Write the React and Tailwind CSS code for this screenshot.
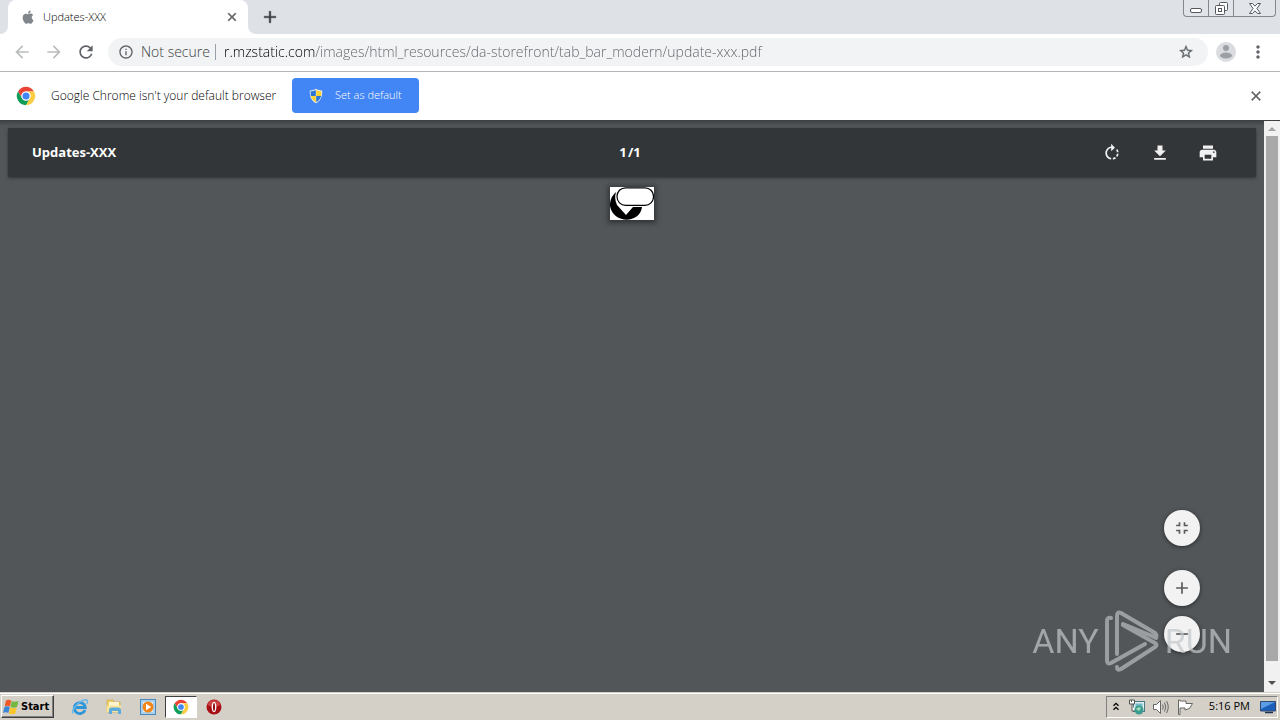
import React from "react";

function AppleIcon() {
  return (
    <svg viewBox="1 1 22 22" className="size-4 fill-[#80868b]" aria-hidden="true">
      <path d="M17.1 12.7c0-2.3 1.9-3.4 2-3.5-1.100-1.600-2.800-1.800-3.400-1.900-1.400-.1-2.800.9-3.500.9s-1.800-.8-3-.8c-1.500 0-3 .9-3.800 2.300-1.600 2.800-.4 7 1.200 9.300.8 1.100 1.700 2.400 2.900 2.300 1.200 0 1.600-.7 3-.7s1.800.7 3 .7c1.300 0 2.100-1.100 2.800-2.200.9-1.300 1.200-2.600 1.300-2.600-.1-.1-2.500-1-2.500-3.800zM14.800 5.900c.6-.8 1.100-1.900.9-2.900-.9 0-2 .6-2.700 1.400-.6.7-1.100 1.700-1 2.800 1.100.1 2.100-.5 2.800-1.300z" />
    </svg>
  );
}

function ChromeIcon({ className }) {
  return (
    <svg viewBox="0 0 48 48" className={className} aria-hidden="true">
      <circle cx="24" cy="24" r="22" fill="#fff" />
      <path d="M24 13H43A22 22 0 0 0 4.900 13L14.500 29.500A11 11 0 0 1 24 13Z" fill="#ea4335" />
      <path d="M14.500 29.500L4.900 13A22 22 0 0 0 24 46L33.500 29.500A11 11 0 0 1 14.500 29.500Z" fill="#109d58" />
      <path d="M33.500 29.500L24 46A22 22 0 0 0 43.100 13H24A11 11 0 0 1 33.500 29.500Z" fill="#fbcd42" />
      <circle cx="24" cy="24" r="11" fill="#fff" />
      <circle cx="24" cy="24" r="8.500" fill="#4285f4" />
    </svg>
  );
}

function ShieldIcon() {
  return (
    <svg viewBox="0 0 16 16" className="size-4" aria-hidden="true">
      <path d="M8 .8C6 2 4 2.500 1.800 2.400C1.500 8 3 12.500 8 15.300C13 12.500 14.500 8 14.200 2.400C12 2.500 10 2 8 .8Z" fill="#e8edf2" />
      <path d="M7.800 2V8H2.900C2.600 6.500 2.600 5 2.700 3.300C4.600 3.300 6.300 2.900 7.800 2Z" fill="#2b76d2" />
      <path d="M8.200 2V8H13.100C13.400 6.500 13.400 5 13.300 3.300C11.400 3.300 9.700 2.900 8.200 2Z" fill="#fad232" />
      <path d="M7.800 8V14.200C5.200 12.700 3.600 10.700 2.900 8Z" fill="#fad232" />
      <path d="M8.200 8V14.200C10.800 12.700 12.400 10.700 13.100 8Z" fill="#2b76d2" />
    </svg>
  );
}

function Glyph({ d, className }) {
  return (
    <svg viewBox="0 0 24 24" className={className} aria-hidden="true">
      <path d={d} />
    </svg>
  );
}

const glyphs = {
  close: "M19 6.410 17.590 5 12 10.590 6.410 5 5 6.410 10.590 12 5 17.590 6.410 19 12 13.410 17.590 19 19 17.590 13.410 12z",
  plus: "M19 13h-6v6h-2v-6H5v-2h6V5h2v6h6v2z",
  minus: "M19 13H5v-2h14v2z",
  back: "M20 11H7.830l5.590-5.590L12 4l-8 8 8 8 1.410-1.410L7.830 13H20v-2z",
  forward: "M12 4l-1.410 1.410L16.170 11H4v2h12.170l-5.580 5.590L12 20l8-8z",
  reload:
    "M17.650 6.350A7.958 7.958 0 0 0 12 4c-4.420 0-7.990 3.580-7.990 8s3.570 8 7.990 8c3.730 0 6.840-2.550 7.730-6h-2.080A5.990 5.990 0 0 1 12 18c-3.310 0-6-2.690-6-6s2.690-6 6-6c1.660 0 3.140.69 4.220 1.780L13 11h7V4l-2.350 2.350z",
  info: "M11 17h2v-6h-2v6zm1-15C6.480 2 2 6.480 2 12s4.480 10 10 10 10-4.480 10-10S17.520 2 12 2zm0 18c-4.410 0-8-3.590-8-8s3.590-8 8-8 8 3.590 8 8-3.590 8-8 8zM11 9h2V7h-2v2z",
  star: "M22 9.240l-7.190-.62L12 2 9.190 8.630 2 9.240l5.460 4.730L5.820 21 12 17.270 18.180 21l-1.630-7.030L22 9.240zM12 15.400l-3.760 2.270 1-4.280-3.320-2.880 4.380-.38L12 6.100l1.710 4.040 4.380.38-3.320 2.880 1 4.280L12 15.400z",
  more: "M12 8c1.100 0 2-.9 2-2s-.9-2-2-2-2 .9-2 2 .9 2 2 2zm0 2c-1.100 0-2 .9-2 2s.9 2 2 2 2-.9 2-2-.9-2-2-2zm0 6c-1.100 0-2 .9-2 2s.9 2 2 2 2-.9 2-2-.9-2-2-2z",
  rotate:
    "M15.550 5.550L11 1v3.070C7.060 4.560 4 7.920 4 12s3.050 7.440 7 7.930v-2.020c-2.840-.48-5-2.940-5-5.910s2.160-5.430 5-5.910V10l4.550-4.450zM19.930 11c-.17-1.390-.72-2.730-1.620-3.890l-1.420 1.420c.54.75.88 1.600 1.020 2.470h2.020zM13 17.900v2.020c1.390-.17 2.740-.71 3.900-1.610l-1.440-1.440c-.75.54-1.590.89-2.460 1.030zm3.890-2.420l1.420 1.410c.9-1.160 1.450-2.500 1.620-3.890h-2.020c-.14.87-.48 1.720-1.020 2.480z",
  download: "M19 9h-4V3H9v6H5l7 7 7-7zM5 18v2h14v-2H5z",
  print:
    "M19 8H5c-1.660 0-3 1.340-3 3v6h4v4h12v-4h4v-6c0-1.660-1.340-3-3-3zm-3 11H8v-5h8v5zm3-7c-.55 0-1-.45-1-1s.45-1 1-1 1 .45 1 1-.45 1-1 1zm-1-9H6v4h12V3z",
  fit: "M5 16h3v3h2v-5H5v2zm3-8H5v2h5V5H8v3zm6 11h2v-3h3v-2h-5v5zm2-11V5h-2v5h5V8h-3z",
};

function TabStrip() {
  return (
    <header className="flex h-[34px] items-start bg-[#dee1e6]">
      <div className="w-2 self-stretch bg-white">
        <div className="h-full rounded-br-lg bg-[#dee1e6]" />
      </div>
      <div className="flex h-full w-60 items-center rounded-t-lg bg-white pr-2 pl-3">
        <AppleIcon />
        <span className="ml-[7px] flex-1 text-[11px] font-light text-black">Updates-XXX</span>
        <button aria-label="Close tab" className="flex size-4 items-center justify-center">
          <Glyph d={glyphs.close} className="size-3.5 fill-[#5f6368] stroke-[#5f6368]" />
        </button>
      </div>
      <div className="w-2 self-stretch bg-white">
        <div className="h-full rounded-bl-lg bg-[#dee1e6]" />
      </div>
      <button aria-label="New tab" className="ml-1 flex h-[34px] w-5 items-center justify-center">
        <Glyph d={glyphs.plus} className="size-5 shrink-0 fill-[#3c4043] stroke-[#3c4043] stroke-[0.5]" />
      </button>
      <div className="mr-1 ml-auto flex h-[17px] divide-x divide-[#85878c] rounded-b border border-t-0 border-[#85878c] bg-[#e1e4e9]">
        <button aria-label="Minimize" className="flex w-[25px] items-end justify-center pb-[3px]">
          <span className="h-[5px] w-3 rounded-xs border border-[#55585e] bg-white" />
        </button>
        <button aria-label="Restore" className="flex w-[25px] items-center justify-center">
          <svg viewBox="0 0 13 13" className="size-[13px] fill-white stroke-[#55585e]" aria-hidden="true">
            <rect x="4.500" y=".5" width="8" height="8" rx="1" />
            <rect x=".5" y="3.500" width="9" height="9" rx="1" />
            <rect x="3.500" y="6.500" width="3" height="3" />
          </svg>
        </button>
        <button aria-label="Close" className="flex w-[41px] items-center justify-center">
          <svg viewBox="0 0 12 11" className="h-[11px] w-3 fill-white stroke-[#55585e]" aria-hidden="true">
            <path d="M.5.500H3.500L6 3.200 8.500.5H11.500L7.900 5.500 11.500 10.500H8.500L6 7.800 3.500 10.500H.5L4.100 5.500Z" />
          </svg>
        </button>
      </div>
    </header>
  );
}

function Toolbar() {
  return (
    <nav className="flex h-[38px] items-center border-b border-[#b3b5b8] bg-white pr-3 pb-px pl-3">
      <button aria-label="Back" className="mr-3">
        <Glyph d={glyphs.back} className="size-5 fill-[#babcbe]" />
      </button>
      <button aria-label="Forward" className="mr-3">
        <Glyph d={glyphs.forward} className="size-5 fill-[#babcbe]" />
      </button>
      <button aria-label="Reload" className="mr-3">
        <Glyph d={glyphs.reload} className="size-5 fill-[#5f6368]" />
      </button>
      <div className="flex h-7 flex-1 items-center rounded-full bg-[#f1f3f4] pr-[14px] pl-2.5 text-sm font-light">
        <button className="flex w-[97px] items-center gap-[7px] whitespace-nowrap text-[#3c4043]">
          <Glyph d={glyphs.info} className="size-4 shrink-0 fill-[#5f6368]" />
          Not secure
        </button>
        <span className="mr-2 h-4 w-px bg-[#9aa0a6]" />
        <input
          aria-label="Address"
          className="min-w-0 flex-1 bg-[linear-gradient(to_right,#000000_91px,#5f6368_91px)] bg-clip-text text-transparent outline-none"
          defaultValue="r.mzstatic.com/images/html_resources/da-storefront/tab_bar_modern/update-xxx.pdf"
        />
        <button aria-label="Bookmark this page">
          <Glyph d={glyphs.star} className="size-4 fill-[#5f6368] stroke-[#5f6368] stroke-[0.5]" />
        </button>
      </div>
      <button aria-label="Profile" className="ml-2">
        <svg viewBox="0 0 20 20" className="size-5" aria-hidden="true">
          <circle cx="10" cy="10" r="10" fill="#dadce0" />
          <circle cx="10" cy="6" r="3" fill="#9aa0a6" />
          <ellipse cx="10" cy="13.500" rx="6" ry="3" fill="#9aa0a6" />
        </svg>
      </button>
      <button aria-label="Menu" className="ml-3">
        <Glyph d={glyphs.more} className="size-5 fill-[#5f6368]" />
      </button>
    </nav>
  );
}

function InfoBar() {
  return (
    <section className="flex h-12 items-center bg-white pr-4 pl-4">
      <ChromeIcon className="size-5" />
      <p className="ml-[15px] w-[229px] text-xs font-light whitespace-nowrap text-black">
        Google Chrome isn't your default browser
      </p>
      <button className="mb-px ml-3 flex h-[35px] w-[127px] items-center gap-[11px] rounded bg-[#4285f4] pl-4 text-[11px] font-light whitespace-nowrap text-white">
        <ShieldIcon />
        Set as default
      </button>
      <button aria-label="Dismiss" className="ml-auto">
        <Glyph d={glyphs.close} className="size-4 fill-[#5f6368] stroke-[#5f6368] stroke-[0.5]" />
      </button>
    </section>
  );
}

function PdfBar() {
  return (
    <div className="grid h-[49px] grid-cols-3 items-center bg-[#323639] px-6 text-[13px] font-bold text-white shadow-[0_1px_3px_rgba(0,0,0,0.4)]">
      <h1>Updates-XXX</h1>
      <div className="flex justify-center pr-1">
        <input aria-label="Page number" className="w-2.5 text-center outline-none" defaultValue="1" />
        <span className="w-3.5">/1</span>
      </div>
      <div className="flex justify-end gap-7 pr-3.5">
        <button aria-label="Rotate clockwise">
          <Glyph d={glyphs.rotate} className="size-5 fill-[#f1f1f1]" />
        </button>
        <button aria-label="Download">
          <Glyph d={glyphs.download} className="size-5 fill-[#f1f1f1]" />
        </button>
        <button aria-label="Print">
          <Glyph d={glyphs.print} className="size-5 fill-[#f1f1f1]" />
        </button>
      </div>
    </div>
  );
}

function ZoomButton({ label, d }) {
  return (
    <button aria-label={label} className="flex size-9 items-center justify-center rounded-full bg-[#f2f2f2] shadow-[0_1px_4px_rgba(0,0,0,0.5)]">
      <Glyph d={d} className="size-5 fill-[#5a5a5a]" />
    </button>
  );
}

function Watermark() {
  return (
    <div className="pointer-events-none absolute right-8 bottom-5 flex items-center font-['Roboto',sans-serif] text-[34px] leading-none text-[#c4c8cb] opacity-70">
      <span>ANY</span>
      <svg viewBox="0 0 54 62" className="mx-1.5 h-[62px] w-[54px] fill-none stroke-[#b9bdc0] stroke-[4]" strokeLinejoin="round" strokeLinecap="round" aria-hidden="true">
        <path d="M6 8Q2 7 2 11V50Q2 55 6 53L40 34" />
        <path d="M12 44V6Q12 1 16 3L50 23Q52 25 51 28L47 26L18 14" />
        <path d="M12 57Q12 61 16 59L50 37Q53 35 50 33L18 15" />
      </svg>
      <span>RUN</span>
    </div>
  );
}

function ScrollBar() {
  return (
    <div className="flex w-4 flex-col items-center bg-[#f1f1f1]">
      <button aria-label="Scroll up" className="flex h-[15px] items-center">
        <svg viewBox="0 0 8 4" className="h-1 w-2 fill-[#a3a3a3]" aria-hidden="true">
          <path d="M0 4 4 0 8 4Z" />
        </svg>
      </button>
      <div className="w-3 flex-1 bg-[#a8a8a8]" />
      <button aria-label="Scroll down" className="flex h-[31px] items-end pb-[7px]">
        <svg viewBox="0 0 8 4" className="h-1 w-2 fill-[#505050]" aria-hidden="true">
          <path d="M0 0H8L4 4Z" />
        </svg>
      </button>
    </div>
  );
}

function Viewer() {
  return (
    <main className="flex flex-1 border-t border-[#3c4043]">
      <div className="relative flex-1 bg-[#525659] bg-[linear-gradient(to_bottom,#3f4346,#525659_5px)] px-2 pt-[7px]">
        <PdfBar />
        <svg viewBox="0 0 44 33" className="mx-auto mt-2.5 h-[33px] w-11 bg-white shadow-[0_1px_5px_2px_rgba(0,0,0,0.4)]" role="img" aria-label="Page 1">
          <path d="M6 5A17 17 0 0 0 0 19C3 37 30 37 32 20H23L16 28L7 18Q4 12 6 5Z" fill="#000" />
          <rect x="7" y=".8" width="36.500" height="17.500" rx="8.500" fill="#fff" stroke="#000" strokeWidth="1.200" />
        </svg>
        <div className="absolute right-16 bottom-10 flex flex-col">
          <ZoomButton label="Fit to page" d={glyphs.fit} />
          <div className="mt-6 flex flex-col gap-2.5">
            <ZoomButton label="Zoom in" d={glyphs.plus} />
            <ZoomButton label="Zoom out" d={glyphs.minus} />
          </div>
        </div>
        <Watermark />
      </div>
      <ScrollBar />
    </main>
  );
}

function TaskBar() {
  return (
    <footer className="flex h-7 items-center border-t border-[#d4d0c8] bg-[#d4d0c8] pl-px shadow-[inset_0_1px_0_#fff]">
      <button className="flex h-[23px] w-[53px] items-center gap-0.5 border border-t-white border-r-[#404040] border-b-[#404040] border-l-white pt-px pl-px font-['DejaVu_Sans_Condensed','DejaVu_Sans',sans-serif] text-[11px] font-bold text-black shadow-[inset_-1px_-1px_0_#808080]">
        <svg viewBox="0 0 16 16" className="size-4 shrink-0" aria-hidden="true">
          <path d="M3 1.500Q5.500 0 8.200 1.500L7 7.500Q4.500 6 1.700 7.300Z" fill="#f0582a" />
          <path d="M8.700 2Q11.500 3.500 15.500 2L14 8Q10.500 9.300 7.500 8Z" fill="#72b843" />
          <path d="M1.500 7.900Q4 6.500 6.800 8.100L5.400 14Q3 12.500 0 13.800Z" fill="#3a86d8" />
          <path d="M7.300 8.500Q10.500 10 13.800 8.700L12.300 14.500Q9 15.700 5.900 14.500Z" fill="#fbc52c" />
        </svg>
        Start
      </button>
      <div className="ml-[11px] flex items-center">
        <button aria-label="Internet Explorer" className="flex h-[22px] w-[30px] items-center justify-center">
          <svg viewBox="0 0 18 18" className="size-[18px] fill-none" aria-hidden="true">
            <path d="M14 12A5.500 5.500 0 1 1 14.300 9.500H5" stroke="#2f95d9" strokeWidth="2.800" />
            <path d="M2 15.500C-.5 12 9 2 14.500 1.800Q18 1.800 15.500 6" stroke="#68b8e8" strokeWidth="1.400" />
          </svg>
        </button>
        <button aria-label="File Explorer" className="ml-1 flex h-[22px] w-[30px] items-center justify-center">
          <svg viewBox="0 0 18 18" className="size-[18px]" aria-hidden="true">
            <path d="M2 4V2H8L9 4H15V14H2Z" fill="#f0cf6d" stroke="#c9a63d" strokeWidth=".7" />
            <path d="M4 4H14V8H4Z" fill="#fff6cf" />
            <path d="M1.500 7.500H16V14H1.500Z" fill="#f8e39a" />
            <path d="M4 16V12Q4 9.500 7 9.500H13Q16 9.500 16 12V16H13V13H7V16Z" fill="#5cabdc" />
          </svg>
        </button>
        <button aria-label="Media Player" className="ml-1 flex h-[22px] w-[30px] items-center justify-center">
          <svg viewBox="0 0 18 18" className="size-[18px]" aria-hidden="true">
            <rect x="1.500" y="1.500" width="15" height="15" fill="#a9d1ed" stroke="#4889bc" />
            <rect x="4" y="4" width="10" height="10" fill="#e2effa" />
            <circle cx="9" cy="9" r="5.500" fill="#f08519" />
            <path d="M7 5.800V12.200L12.200 9Z" fill="#fff" />
          </svg>
        </button>
        <button aria-label="Google Chrome" className="ml-0.5 flex h-[22px] w-8 items-center justify-center border border-t-[#404040] border-r-white border-b-white border-l-[#404040] bg-white">
          <ChromeIcon className="size-4" />
        </button>
        <button aria-label="Opera" className="ml-0.5 flex h-[22px] w-[30px] items-center justify-center">
          <svg viewBox="0 0 16 16" className="size-4" aria-hidden="true">
            <circle cx="8" cy="8" r="7.500" fill="#a80f14" />
            <path d="M1.500 6A6.800 6.800 0 0 1 14.500 6Q8 9 1.500 6Z" fill="#d04345" />
            <path d="M8 2.800C11.200 2.800 11.200 13.200 8 13.200C4.800 13.200 4.800 2.800 8 2.800Z" fill="#fff" />
            <ellipse cx="8" cy="8" rx="1" ry="4" fill="#8a0a0e" />
          </svg>
        </button>
      </div>
      <div className="mr-0.5 ml-auto flex h-[22px] items-center border border-t-[#808080] border-r-white border-b-white border-l-[#808080] pl-1.5 text-[11px] text-black">
        <button aria-label="Show hidden icons">
          <svg viewBox="0 0 6 9" className="h-[9px] w-1.5 fill-none stroke-black" strokeWidth="1.300" aria-hidden="true">
            <path d="M.5 3.800 3 1.300 5.500 3.800M.5 7.800 3 5.300 5.500 7.800" />
          </svg>
        </button>
        <svg viewBox="0 0 16 16" className="ml-2.5 size-4" aria-hidden="true">
          <rect x="4.500" y="2.500" width="11" height="10" fill="#dff0f2" stroke="#4d7783" />
          <rect x="6.500" y="4.500" width="7" height="6" fill="#72b9c5" />
          <path d="M.5 1H5.500V5H.5ZM2.500 1V3M3 5V12H6" fill="#fff" stroke="#555" />
          <circle cx="10" cy="11" r="4.500" fill="#3c9c90" />
          <path d="M7 10Q10 7 12 9L10 12Z" fill="#a5dfbc" />
        </svg>
        <svg viewBox="0 0 16 16" className="ml-2 size-4 fill-white stroke-[#666]" aria-hidden="true">
          <path d="M.5 5.500H3.500L7.500 1.500V14.500L3.500 10.500H.5Z" />
          <path d="M9.500 5.500Q11 8 9.500 10.500M11.500 3.500Q14 8 11.500 12.500M13.500 2Q17 8 13.500 14" fill="none" />
        </svg>
        <svg viewBox="0 0 16 16" className="ml-2 size-4 fill-white stroke-[#666]" aria-hidden="true">
          <path d="M1.500 1V15.500H3V9H8V11L12.500 9.500L15.500 4.500H9V2H3V1Z" />
        </svg>
        <time className="ml-4">5:16 PM</time>
        <svg viewBox="0 0 16 14" className="mr-px ml-2.5 h-3.5 w-4" aria-hidden="true">
          <path d="M.5 1.500H15.500V11H.5Z" fill="#1b5fbb" stroke="#304b72" />
          <path d="M1 2H15L1 9Z" fill="#5a9de4" />
          <path d="M5 12.500H13" stroke="#1d3150" strokeWidth="1.500" />
        </svg>
      </div>
    </footer>
  );
}

export default function App() {
  return (
    <div className="flex min-h-screen flex-col font-['Open_Sans','Noto_Sans',sans-serif]">
      <TabStrip />
      <Toolbar />
      <InfoBar />
      <Viewer />
      <TaskBar />
    </div>
  );
}
